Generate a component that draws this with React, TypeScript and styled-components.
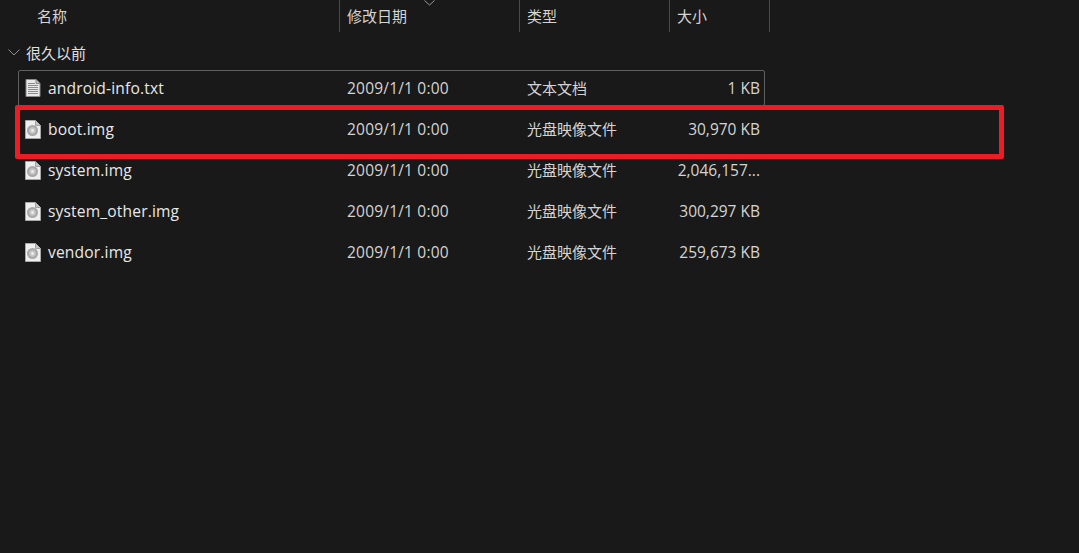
import { createGlobalStyle } from "styled-components";
import styled from "styled-components";

const GlobalStyle = createGlobalStyle`
  html, body {
    margin: 0;
    padding: 0;
    background: #191919;
  }
  body {
    font-family: "Open Sans", "Noto Sans CJK SC", sans-serif;
    color: #e6e6e6;
    overflow: hidden;
  }
`;

const Page = styled.div`
  position: relative;
  width: 1079px;
  height: 553px;
  background: #191919;
  overflow: hidden;
`;

const Header = styled.div`
  display: flex;
  height: 32px;
  padding-left: 18px;
`;

const HeaderCell = styled.div<{ $w: number }>`
  position: relative;
  width: ${(p) => p.$w}px;
  box-sizing: border-box;
  padding-left: 7px;
  border-right: 1px solid #4a4a4a;
  font-size: 15px;
  line-height: 32px;
  color: #d4d4d4;
  &:first-child {
    padding-left: 19px;
  }
`;

const SortMark = styled.svg`
  position: absolute;
  left: 84px;
  top: 0;
`;

const Group = styled.div`
  display: flex;
  align-items: center;
  gap: 6px;
  height: 20px;
  margin-top: 10px;
  padding-left: 8px;
  font-size: 15px;
  color: #e0e0e0;
`;

const List = styled.div`
  display: flex;
  flex-direction: column;
  gap: 5px;
  width: 747px;
  margin: 8px 0 0 18px;
`;

const Row = styled.div<{ $focus?: boolean }>`
  display: flex;
  align-items: center;
  box-sizing: border-box;
  height: 36px;
  border: 1px solid ${(p) => (p.$focus ? "#5f5f5f" : "transparent")};
  border-radius: 2px;
  color: #e8e8e8;
`;

const NameCell = styled.div`
  display: flex;
  align-items: center;
  gap: 7px;
  width: 321px;
  padding-left: 6px;
  box-sizing: border-box;
  font-size: 15.6px;
  letter-spacing: 0.15px;
`;

const DateCell = styled.div`
  width: 180px;
  padding-left: 7px;
  box-sizing: border-box;
  font-size: 15.5px;
  letter-spacing: 0.2px;
  color: #d4d4d4;
`;

const TypeCell = styled.div`
  width: 150px;
  padding-left: 7px;
  padding-bottom: 2px;
  box-sizing: border-box;
  font-size: 15px;
  color: #d4d4d4;
`;

const SizeCell = styled.div`
  flex: 1;
  padding-right: 4px;
  text-align: right;
  font-size: 15.5px;
  color: #d4d4d4;
  white-space: nowrap;
`;

const Highlight = styled.div`
  position: absolute;
  left: 15px;
  top: 105px;
  width: 989px;
  height: 54px;
  box-sizing: border-box;
  border: 5px solid #ed1c24;
  border-radius: 2px;
  pointer-events: none;
`;

const TextFileIcon = () => (
  <svg width="16" height="18" viewBox="0 0 16 18">
    <path d="M1 0.5H11L15 4.5V17.5H1Z" fill="#e8e8e8" stroke="#8a8a8a" strokeWidth="1" />
    <path d="M11 0.5V4.5H15" fill="#bdbdbd" stroke="#8a8a8a" strokeWidth="1" />
    <path d="M3 4.5H10M3 6.5H13M3 8.5H13M3 10.5H13M3 12.5H13M3 14.5H13" stroke="#8c8c8c" strokeWidth="1" />
  </svg>
);

const DiscFileIcon = () => (
  <svg width="16" height="19" viewBox="0 0 16 19">
    <path d="M0.5 0.5H10.5L15.5 5.5V18.5H0.5Z" fill="#efefef" stroke="#a8a8a8" strokeWidth="1" />
    <path d="M10.5 0.5V5.5H15.5" fill="#c4c4c4" stroke="#a0a0a0" strokeWidth="1" />
    <circle cx="7.5" cy="10.5" r="5.5" fill="#a8a8a8" />
    <circle cx="7.5" cy="10.5" r="3.2" fill="#c8c8c8" />
    <circle cx="7.5" cy="10.5" r="1.2" fill="#f4f4f4" />
  </svg>
);

const files = [
  { name: "android-info.txt", type: "文本文档", size: "1 KB", text: true },
  { name: "boot.img", type: "光盘映像文件", size: "30,970 KB" },
  { name: "system.img", type: "光盘映像文件", size: "2,046,157..." },
  { name: "system_other.img", type: "光盘映像文件", size: "300,297 KB" },
  { name: "vendor.img", type: "光盘映像文件", size: "259,673 KB" },
];

export default function App() {
  return (
    <Page>
      <GlobalStyle />
      <Header>
        <HeaderCell $w={322}>名称</HeaderCell>
        <HeaderCell $w={180}>
          修改日期
          <SortMark width="11" height="6" viewBox="0 0 11 6">
            <path d="M0.5 0.5L5.5 5L10.5 0.5" fill="none" stroke="#9a9a9a" strokeWidth="1" />
          </SortMark>
        </HeaderCell>
        <HeaderCell $w={150}>类型</HeaderCell>
        <HeaderCell $w={100}>大小</HeaderCell>
      </Header>
      <Group>
        <svg width="12" height="7" viewBox="0 0 12 7">
          <path d="M0.5 0.5L6 6L11.5 0.5" fill="none" stroke="#8f8f8f" strokeWidth="1" />
        </svg>
        很久以前
      </Group>
      <List>
        {files.map((f, i) => (
          <Row key={f.name} $focus={i === 0}>
            <NameCell>
              {f.text ? <TextFileIcon /> : <DiscFileIcon />}
              {f.name}
            </NameCell>
            <DateCell>2009/1/1 0:00</DateCell>
            <TypeCell>{f.type}</TypeCell>
            <SizeCell>{f.size}</SizeCell>
          </Row>
        ))}
      </List>
      <Highlight />
    </Page>
  );
}
